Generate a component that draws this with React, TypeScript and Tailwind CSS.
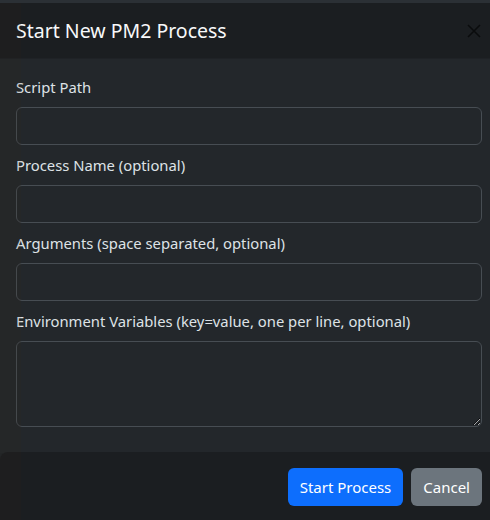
import React from 'react';

const fields = [
  { label: 'Script Path' },
  { label: 'Process Name (optional)' },
  { label: 'Arguments (space separated, optional)' },
];

export default function App() {
  return (
    <div
      className="relative w-[490px] h-[520px] overflow-hidden bg-[#2b3035]"
      style={{ fontFamily: '"Noto Sans", "Open Sans", sans-serif' }}
    >
      <div className="mt-[3px] w-[498px] flex flex-col bg-[#212529] text-[#dee2e6]">
        {/* Header */}
        <div className="flex items-center h-[56px] px-4 bg-[#1b1e21] border-b border-[#1f2226]">
          <h5 className="text-[19.5px] leading-[30px] text-[#f8f9fa]">Start New PM2 Process</h5>
          <button className="ml-auto w-4 h-4 text-black/60" aria-label="Close">
            <svg viewBox="0 0 16 16" className="w-4 h-4" fill="none" stroke="currentColor" strokeWidth={1.6}>
              <path d="M2 2l12 12M14 2L2 14" />
            </svg>
          </button>
        </div>

        {/* Body */}
        <div className="px-4 pt-4 pb-[18px] flex flex-col bg-[#23272b]">
          {fields.map((f) => (
            <div key={f.label} className="mb-2">
              <label className="block text-[14.8px] leading-6 mb-2">{f.label}</label>
              <input
                type="text"
                className="block w-full h-[38px] rounded-md border border-[#474d53] bg-[#23272b] px-3 outline-none"
              />
            </div>
          ))}
          <div className="mb-2">
            <label className="block text-[14.8px] leading-6 mb-2">
              Environment Variables (key=value, one per line, optional)
            </label>
            <textarea
              rows={3}
              className="block w-full h-[86px] rounded-md border border-[#474d53] bg-[#23272b] px-3 py-1.5 outline-none"
            />
          </div>
        </div>

        {/* Footer */}
        <div className="flex justify-end gap-2 px-4 pt-4 pb-4 bg-[#1b1e21] rounded-tl-lg -mt-px">
          <button className="h-[38px] px-3 rounded-md bg-[#0d6efd] text-white text-[15px]">Start Process</button>
          <button className="h-[38px] px-3 rounded-md bg-[#6c757d] text-white text-[15px]">Cancel</button>
        </div>
      </div>
      {/* faint backdrop tint along the left edge */}
      <div className="absolute left-0 top-[3px] bottom-0 w-[21px] bg-[#3a2a10]/10 pointer-events-none" />
    </div>
  );
}
